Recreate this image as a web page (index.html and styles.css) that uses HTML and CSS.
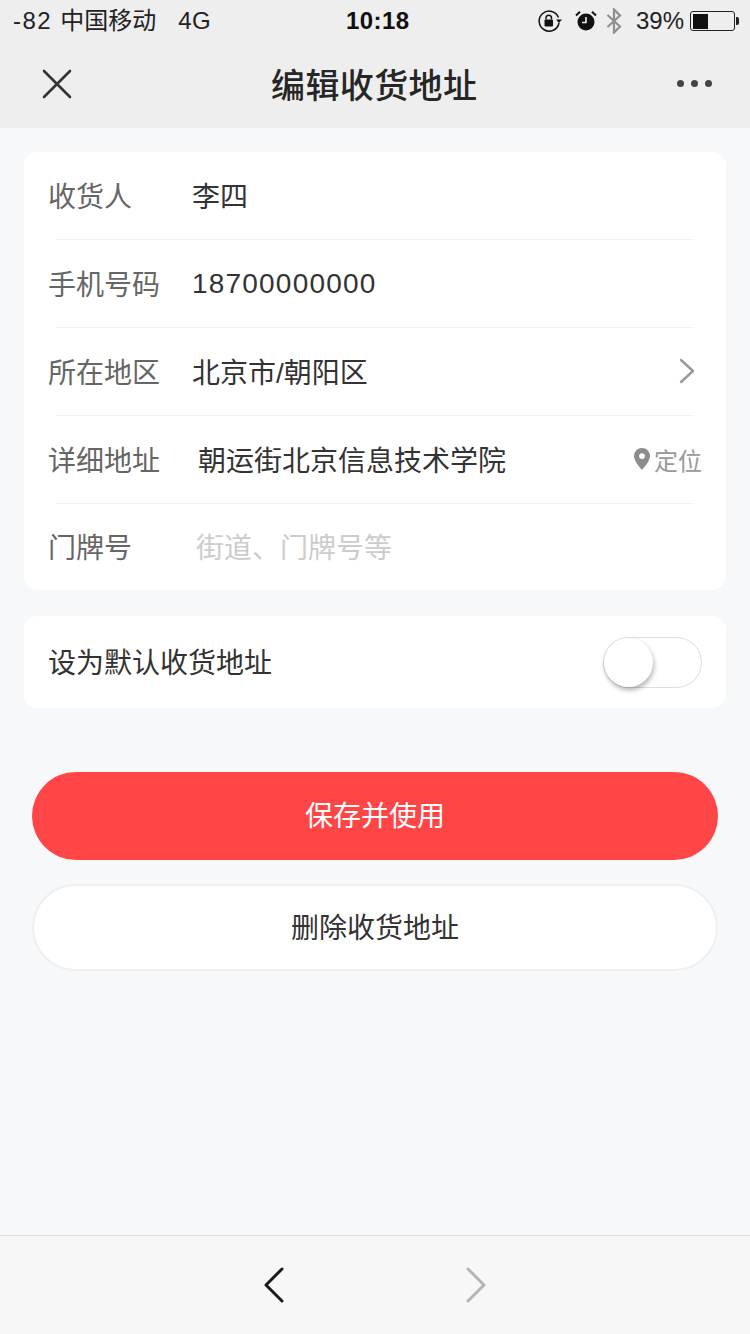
FILE: index.html
```html
<!DOCTYPE html>
<html lang="zh-CN">
<head>
    <meta charset="UTF-8">
    <meta name="viewport" content="width=device-width, initial-scale=1.0">
    <title>编辑收货地址</title>
    <link rel="stylesheet" href="styles.css">
</head>
<body>
    <div class="page">
        <header class="top">
            <div class="status-bar">
                <div class="status-left">
                    <span class="signal">-82</span>
                    <span class="carrier">中国移动</span>
                    <span class="net">4G</span>
                </div>
                <div class="status-time">10:18</div>
                <div class="status-right">
                    <svg class="ico-lock" width="24" height="24" viewBox="0 0 24 24">
                        <path d="M20.500 8.500A10 10 0 1 0 21 14" fill="none" stroke="#111" stroke-width="1.500"/>
                        <path d="M18 10.500h6l-3 3.500z" fill="#111"/>
                        <rect x="6.500" y="10.500" width="8.500" height="7" rx="1" fill="#111"/>
                        <path d="M8 10.500V9a2.700 2.700 0 0 1 5.500 0v1.500" fill="none" stroke="#111" stroke-width="1.500"/>
                    </svg>
                    <svg class="ico-alarm" width="22" height="22" viewBox="0 0 22 22">
                        <circle cx="11" cy="12" r="8.500" fill="#111"/>
                        <path d="M11 7v5.500H7" fill="none" stroke="#eee" stroke-width="1.600"/>
                        <path d="M1 5.500 5 1.800M21 5.500 17 1.800" stroke="#111" stroke-width="2"/>
                    </svg>
                    <svg class="ico-bt" width="16" height="26" viewBox="0 0 16 26">
                        <path d="M1.500 7 14 18.500 8 24.500V1.500l6 6L1.500 19" fill="none" stroke="#8e8e8e" stroke-width="2.200"/>
                    </svg>
                    <span class="battery-text">39%</span>
                    <span class="battery"><span class="battery-level"></span></span>
                    <span class="battery-tip"></span>
                </div>
            </div>
            <div class="nav-bar">
                <svg class="nav-close" width="30" height="30" viewBox="0 0 30 30">
                    <path d="M2 2 28 28M28 2 2 28" stroke="#333" stroke-width="2.600" stroke-linecap="round"/>
                </svg>
                <h1>编辑收货地址</h1>
                <div class="nav-more"><i></i><i></i><i></i></div>
            </div>
        </header>

        <main class="content">
            <section class="card">
                <div class="row">
                    <span class="label">收货人</span>
                    <span class="value">李四</span>
                </div>
                <div class="row">
                    <span class="label">手机号码</span>
                    <span class="value num">18700000000</span>
                </div>
                <div class="row">
                    <span class="label">所在地区</span>
                    <span class="value">北京市/朝阳区</span>
                    <svg class="row-arrow" width="16" height="26" viewBox="0 0 16 26">
                        <path d="M2 2 14 13 2 24" fill="none" stroke="#999" stroke-width="2.400" stroke-linecap="round" stroke-linejoin="round"/>
                    </svg>
                </div>
                <div class="row">
                    <span class="label">详细地址</span>
                    <span class="value value-addr">朝运街北京信息技术学院</span>
                    <span class="locate">
                        <svg width="16" height="22" viewBox="0 0 16 22">
                            <path fill-rule="evenodd" d="M8 0a8 8 0 0 1 8 8c0 4.500-5 10.500-8 14-3-3.500-8-9.500-8-14a8 8 0 0 1 8-8zm0 5.200a2.900 2.900 0 1 0 0 5.800 2.900 2.900 0 0 0 0-5.800z" fill="#8c8c8c"/>
                        </svg>
                        定位
                    </span>
                </div>
                <div class="row">
                    <span class="label">门牌号</span>
                    <span class="value placeholder">街道、门牌号等</span>
                </div>
            </section>

            <section class="card card-default">
                <span class="default-text">设为默认收货地址</span>
                <span class="switch"><span class="knob"></span></span>
            </section>

            <div class="actions">
                <button class="btn btn-save">保存并使用</button>
                <button class="btn btn-del">删除收货地址</button>
            </div>
        </main>

        <footer class="toolbar">
            <svg width="22" height="36" viewBox="0 0 22 36">
                <path d="M19 2 3 18 19 34" fill="none" stroke="#1a1a1a" stroke-width="3" stroke-linecap="round" stroke-linejoin="round"/>
            </svg>
            <svg width="22" height="36" viewBox="0 0 22 36">
                <path d="M3 2 19 18 3 34" fill="none" stroke="#b4b4b4" stroke-width="3" stroke-linecap="round" stroke-linejoin="round"/>
            </svg>
        </footer>
    </div>
</body>
</html>
```

FILE: styles.css
```css
* { box-sizing: border-box; }
body {
    margin: 0;
    background-color: #f7f8fa;
    color: #333;
    font-family: "Liberation Sans", "Noto Sans CJK SC", sans-serif;
}
.page { display: flex; flex-direction: column; height: 1334px; overflow: hidden; }

/* top area */
.top { height: 128px; background-color: #eeeeee; border-bottom: 1px solid #f0f0f0; }
.status-bar { display: flex; align-items: center; justify-content: space-between; height: 42px; padding: 0 11px 0 13px; color: #222; font-size: 24px; line-height: 24px; position: relative; }
.status-left { display: flex; align-items: center; }
.signal { letter-spacing: 1.5px; margin-right: 8px; }
.carrier { margin-right: 22px; }
.net { letter-spacing: 0.5px; }
.status-time { font-weight: bold; color: #111; letter-spacing: 0.4px; position: absolute; left: 346px; }
.status-right { display: flex; align-items: center; }
.ico-lock { margin-right: 13px; }
.ico-alarm { margin-right: 9px; }
.ico-bt { margin-right: 14px; }
.battery-text { margin-right: 6px; }
.battery { width: 45px; height: 20px; border: 1.500px solid #222; border-radius: 3px; padding: 1.500px; display: block; }
.battery-level { display: block; width: 15px; height: 100%; background-color: #111; }
.battery-tip { width: 3px; height: 8px; background-color: #222; border-radius: 0 2px 2px 0; margin-left: 1px; }

.nav-bar { display: flex; align-items: center; justify-content: space-between; height: 83px; padding: 0 38px 0 42px; position: relative; }
.nav-bar h1 { margin: 0; font-size: 34px; font-weight: 500; letter-spacing: 0.4px; color: #262626; position: absolute; left: 271px; }
.nav-more { display: flex; gap: 7px; }
.nav-more i { width: 7px; height: 7px; border-radius: 50%; background-color: #444; }

/* form */
.content { flex: 1; padding: 24px 24px 0; }
.card { background-color: #fff; border-radius: 14px; }
.row { display: flex; align-items: center; height: 88px; padding: 0 24px 2px; font-size: 28px; position: relative; }
.row:last-child { height: 86px; }
.row + .row::before { content: ""; position: absolute; top: -1px; left: 31px; right: 32px; height: 1px; background-color: #f2f2f2; }
.label { width: 144px; flex-shrink: 0; color: #666; }
.value { color: #333; flex: 1; }
.num { letter-spacing: 1.2px; padding-top: 2px; }
.value-addr { padding-left: 6px; }
.placeholder { color: #ccc; padding-left: 4px; }
.row-arrow { margin-right: 7px; }
.locate { display: flex; align-items: center; gap: 4px; font-size: 24px; color: #999; }

.card-default { display: flex; align-items: center; justify-content: space-between; height: 92px; margin-top: 26px; padding: 0 24px; font-size: 28px; color: #333; }
.default-text { padding-bottom: 2px; }
.switch { display: block; width: 99px; height: 51px; border: 1px solid #dedede; border-radius: 26px; background-color: #fff; position: relative; }
.knob { position: absolute; left: 0; top: 0; width: 49px; height: 49px; border-radius: 50%; background-color: #fff; box-shadow: 1px 3px 5px rgba(0,0,0,0.3); }

/* buttons */
.actions { display: flex; flex-direction: column; gap: 24px; margin-top: 64px; padding: 0 8px; }
.btn { display: block; width: 100%; border-radius: 44px; font-family: inherit; font-size: 28px; padding: 0 0 4px; }
.btn-save { height: 88px; border: none; background-color: #ff4546; color: #fff; }
.btn-del { height: 87px; border: 2px solid #eeeff1; background-color: #fff; color: #333; }

/* bottom bar */
.toolbar { display: flex; align-items: center; justify-content: center; gap: 180px; height: 99px; background-color: #f7f7f7; border-top: 1px solid #dedede; }
```
